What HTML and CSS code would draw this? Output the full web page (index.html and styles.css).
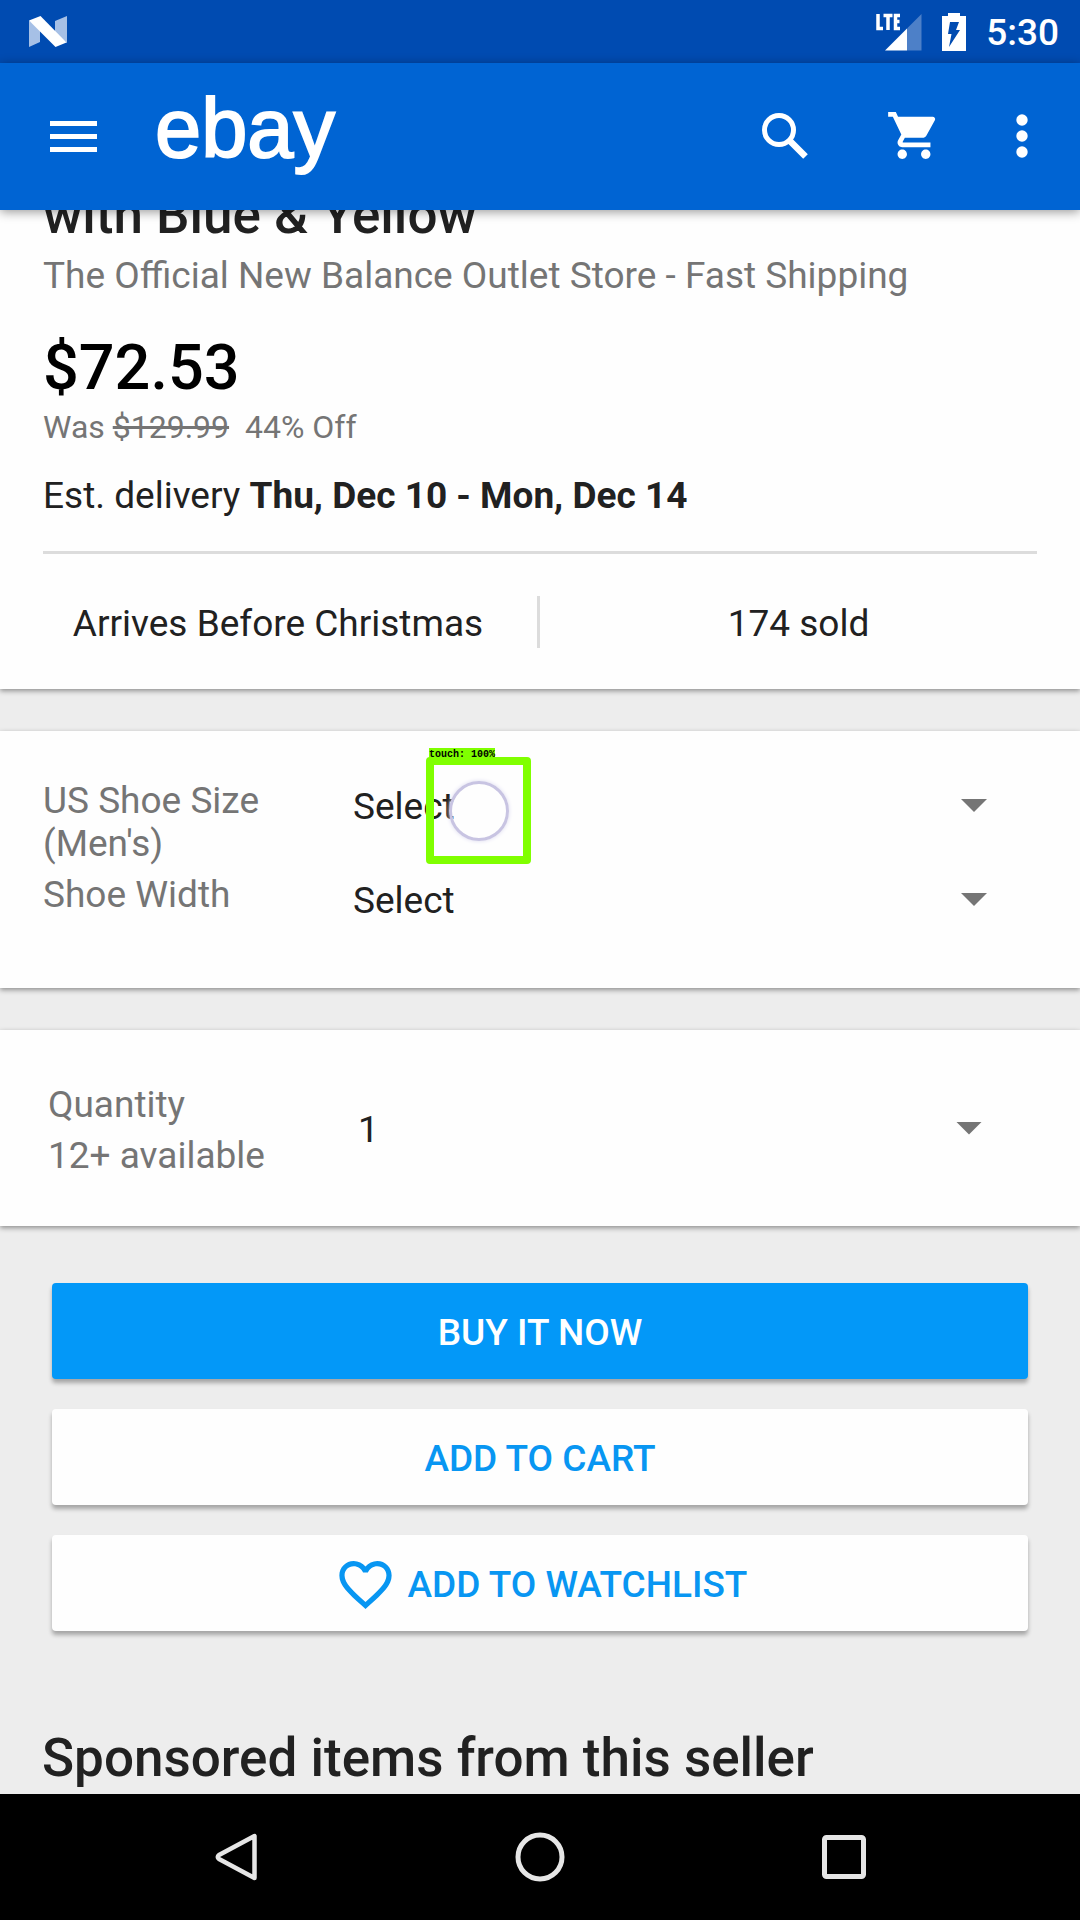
FILE: index.html
```html
<!DOCTYPE html>
<html lang="en">
<head>
<meta charset="utf-8">
<meta name="viewport" content="width=device-width, initial-scale=1">
<title>eBay item</title>
<link rel="stylesheet" href="styles.css">
</head>
<body>
<div class="status-bar">
  <svg class="n-icon" width="40" height="32" viewBox="0 0 40 32" aria-hidden="true">
    <path d="M1 4.500 L12 12 V26 L1 31Z M27 5 L39 0 V27 L27 18Z" fill="#a6c0e6"/>
    <path d="M1 4.500 L12.500 0 L38.500 26.500 L27.500 31Z" fill="#fff"/>
  </svg>
  <div class="status-icons">
    <svg width="46" height="38" viewBox="0 0 46 38" aria-hidden="true">
      <path d="M45.500 1 V37.500 H31 V15.500Z" fill="#4d80c8"/>
      <path d="M31 15.500 V37.500 H9Z" fill="#fff"/>
      <path d="M2 1V15.500H7 M7.500 2.500H16.500 M12 2.500V17 M24 2.500H19.500V15.500H24 M19.500 8.500H23.500" fill="none" stroke="#fff" stroke-width="3.500"/>
    </svg>
    <svg width="24" height="38" viewBox="0 0 24 38" aria-hidden="true">
      <path d="M6 0H18V3H24V38H0V3H6Z" fill="#fff"/>
      <path d="M8 9H17L14 17H18L7 34L9.500 21H6Z" fill="#004bb1"/>
    </svg>
    <span class="clock">5:30</span>
  </div>
</div>

<header class="app-bar">
  <button class="icon-button" type="button" aria-label="Menu">
    <svg width="47" height="31" viewBox="0 0 47 31"><path d="M0 0H47V5H0Z M0 13H47V18H0Z M0 26H47V31H0Z" fill="#fff"/></svg>
  </button>
  <a class="logo" href="#">ebay</a>
  <div class="actions">
    <button class="icon-button" type="button" aria-label="Search">
      <svg width="46" height="46" viewBox="0 0 46 46"><circle cx="17" cy="17" r="14.500" fill="none" stroke="#fff" stroke-width="5"/><path d="M28 28L43.500 43.500" stroke="#fff" stroke-width="6.500"/><path d="M27 27L31 31" stroke="#fff" stroke-width="5"/></svg>
    </button>
    <button class="icon-button" type="button" aria-label="Cart">
      <svg width="48" height="47" viewBox="1 2 20.300 20"><path fill="#fff" d="M7 18c-1.100 0-1.990.9-1.990 2S5.900 22 7 22s2-.9 2-2-.9-2-2-2zM1 2v2h2l3.600 7.590-1.350 2.450c-.16.28-.25.61-.25.960 0 1.100.9 2 2 2h12v-2H7.420c-.14 0-.25-.11-.25-.25l.03-.12.900-1.630h7.450c.75 0 1.410-.41 1.750-1.030l3.580-6.490c.08-.14.12-.31.12-.480 0-.55-.45-1-1-1H5.210l-.94-2H1zm16 16c-1.100 0-1.990.9-1.990 2s.89 2 1.990 2 2-.9 2-2-.9-2-2-2z"/></svg>
    </button>
    <button class="icon-button" type="button" aria-label="More options">
      <svg width="12" height="44" viewBox="0 0 12 44"><circle cx="6" cy="6" r="5.700" fill="#fff"/><circle cx="6" cy="22" r="5.700" fill="#fff"/><circle cx="6" cy="38" r="5.700" fill="#fff"/></svg>
    </button>
  </div>
</header>

<main class="content">
  <section class="card summary">
    <h1 class="title">with Blue &amp; Yellow</h1>
    <p class="subtitle">The Official New Balance Outlet Store - Fast Shipping</p>
    <p class="price">$72.53</p>
    <p class="was">Was <s>$129.99</s>&nbsp; 44% Off</p>
    <p class="delivery">Est. delivery <b>Thu, Dec 10 - Mon, Dec 14</b></p>
    <div class="facts">
      <span>Arrives Before Christmas</span>
      <span>174 sold</span>
    </div>
  </section>

  <section class="card options">
    <div class="option-row">
      <label for="size">US Shoe Size (Men's)</label>
      <div class="picker"><select id="size"><option>Select</option></select></div>
      <div class="touch" aria-hidden="true">
        <span class="touch-label">touch: 100%</span>
        <span class="touch-ring"></span>
      </div>
    </div>
    <div class="option-row">
      <label for="width">Shoe Width</label>
      <div class="picker"><select id="width"><option>Select</option></select></div>
    </div>
  </section>

  <section class="card quantity">
    <label for="qty">Quantity<br>12+ available</label>
    <div class="picker"><select id="qty"><option>1</option></select></div>
  </section>

  <div class="buttons">
    <button class="button primary" type="button">BUY IT NOW</button>
    <button class="button" type="button">ADD TO CART</button>
    <button class="button watch" type="button">
      <svg width="53" height="48" viewBox="2 3 20 18.350" aria-hidden="true"><path fill="#0896f2" d="M16.500 3c-1.740 0-3.410.81-4.500 2.090C10.910 3.810 9.240 3 7.500 3 4.420 3 2 5.420 2 8.500c0 3.780 3.400 6.860 8.550 11.540L12 21.350l1.450-1.320C18.600 15.360 22 12.280 22 8.500 22 5.420 19.580 3 16.500 3zm-4.400 15.550l-.1.100-.1-.1C7.140 14.240 4 11.390 4 8.500 4 6.500 5.500 5 7.500 5c1.540 0 3.040.99 3.570 2.360h1.870C13.460 5.990 14.960 5 16.500 5c2 0 3.500 1.500 3.500 3.500 0 2.890-3.140 5.740-7.900 10.050z"/></svg>
      ADD TO WATCHLIST
    </button>
  </div>

  <h2 class="sponsored">Sponsored items from this seller</h2>
</main>

<nav class="nav-bar" aria-label="System">
  <button class="nav-button" type="button" aria-label="Back">
    <svg width="50" height="50" viewBox="0 0 50 50"><path d="M43.500 4V46L8 27Q5.500 25 8 23Z" fill="none" stroke="#e6e6e6" stroke-width="4.500" stroke-linejoin="round"/></svg>
  </button>
  <button class="nav-button" type="button" aria-label="Home">
    <svg width="50" height="50" viewBox="0 0 50 50"><circle cx="25" cy="25" r="22" fill="none" stroke="#e6e6e6" stroke-width="5"/></svg>
  </button>
  <button class="nav-button" type="button" aria-label="Recent apps">
    <svg width="50" height="50" viewBox="0 0 50 50"><rect x="5.500" y="5.500" width="39" height="39" rx="2" fill="none" stroke="#e6e6e6" stroke-width="5"/></svg>
  </button>
</nav>
</body>
</html>
```
FILE: styles.css
```css
* {
  box-sizing: border-box;
}

body {
  margin: 0;
  height: 100vh;
  display: flex;
  flex-direction: column;
  background: #ededed;
  color: #212121;
  font-family: Roboto, "Noto Sans", sans-serif;
  font-size: 37px;
  line-height: 48px;
}

h1, h2, p {
  margin: 0;
  font-weight: 500;
}

button, select {
  margin: 0;
  padding: 0;
  border: 0;
  background: none;
  color: inherit;
  font: inherit;
}

svg {
  display: block;
  flex: none;
}

.status-bar {
  flex: none;
  height: 63px;
  padding: 0 21px 0 28px;
  display: flex;
  align-items: center;
  justify-content: space-between;
  background: #004bb1;
  color: #fff;
}

.status-icons {
  display: flex;
  align-items: center;
  gap: 20px;
}

.clock {
  padding-top: 3px;
  font-size: 37px;
  font-weight: 500;
}

.app-bar {
  position: relative;
  z-index: 1;
  flex: none;
  height: 147px;
  padding: 0 52px 0 50px;
  display: flex;
  align-items: center;
  background: #0064d3;
  box-shadow: 0 2px 10px rgba(0, 0, 0, 0.4);
}

.logo {
  margin-left: 58px;
  padding-bottom: 16px;
  color: #fff;
  font-family: "Liberation Sans", sans-serif;
  font-size: 83px;
  line-height: 96px;
  text-decoration: none;
  -webkit-text-stroke: 2px #fff;
}

.actions {
  margin-left: auto;
  padding-bottom: 2px;
  display: flex;
  align-items: center;
  gap: 80px;
}

.content {
  flex: 1;
  min-height: 0;
  overflow: hidden;
}

.card {
  background: #fefefe;
  box-shadow: 0 2px 5px rgba(0, 0, 0, 0.4);
}

.card + .card {
  margin-top: 42px;
}

.summary {
  padding: 0 43px;
  display: flow-root;
}

/* The page is scrolled, so the title slides under the app bar. */
.title {
  margin-top: -27px;
  font-size: 53px;
  line-height: 64px;
}

.subtitle {
  margin-top: 5px;
  color: #757575;
  font-weight: 400;
}

.price {
  margin-top: 30px;
  color: #000;
  font-size: 63px;
  line-height: 76px;
}

.was {
  margin-top: 1px;
  color: #757575;
  font-size: 32px;
  font-weight: 400;
  line-height: 40px;
}

.delivery {
  margin-top: 25px;
  font-weight: 400;
}

.facts {
  margin-top: 31px;
  padding: 42px 0 41px;
  border-top: 3px solid #dcdcdc;
  display: grid;
  grid-template-columns: 1fr 1fr;
  line-height: 49px;
  text-align: center;
}

.facts span {
  padding: 3px 24px 0 0;
  border-right: 3px solid #dcdcdc;
}

.facts span + span {
  padding: 3px 0 0 20px;
  border: 0;
}

.options {
  padding: 48px 43px 29px;
  line-height: 43px;
}

.option-row {
  position: relative;
  display: grid;
  grid-template-columns: 310px 1fr;
  min-height: 86px;
}

.option-row + .option-row {
  margin-top: 8px;
}

.option-row label {
  max-width: 260px;
  color: #757575;
}

.option-row .picker {
  padding-top: 6px;
}

.picker {
  display: grid;
  align-items: center;
  align-self: start;
}

.picker select {
  grid-area: 1 / 1;
  width: 100%;
  appearance: none;
  line-height: 43px;
}

.picker::after {
  content: "";
  grid-area: 1 / 1;
  justify-self: end;
  width: 26px;
  height: 13px;
  margin: 0 50px 2px 0;
  background: #757575;
  clip-path: polygon(0 0, 100% 0, 50% 100%);
  pointer-events: none;
}

.touch {
  position: absolute;
  left: 383px;
  top: -22px;
  width: 105px;
  height: 107px;
  border: 8px solid #80ff00;
  border-radius: 4px;
  display: grid;
  place-items: center;
}

.touch-label {
  position: absolute;
  left: -5px;
  top: -17px;
  height: 14px;
  background: #80ff00;
  color: #000;
  font: bold 10px/14px "Liberation Mono", monospace;
  white-space: nowrap;
}

.touch-ring {
  width: 60px;
  height: 60px;
  border: 3px solid #c8c4e2;
  border-radius: 50%;
  background: rgba(255, 255, 255, 0.2);
  box-shadow: 0 0 4px #dcdaf0;
}

.quantity {
  padding: 49px 48px 45px;
  display: grid;
  grid-template-columns: 310px 1fr;
  line-height: 51px;
}

.quantity label {
  color: #757575;
}

.quantity .picker {
  align-self: center;
  padding-bottom: 2px;
}

.buttons {
  padding: 57px 52px 0;
  display: grid;
  gap: 30px;
}

.button {
  height: 96px;
  padding-top: 3px;
  display: flex;
  align-items: center;
  justify-content: center;
  gap: 16px;
  border-radius: 4px;
  background: #fefefe;
  box-shadow: 0 4px 4px rgba(0, 0, 0, 0.3);
  color: #0896f2;
  font-weight: 500;
}

.primary {
  background: #0398f8;
  color: #fff;
}

.watch {
  padding-left: 6px;
}

.sponsored {
  margin-top: 95px;
  padding: 0 42px;
  font-size: 53px;
  line-height: 64px;
}

.nav-bar {
  flex: none;
  height: 126px;
  padding: 0 84px;
  display: grid;
  grid-template-columns: repeat(3, 1fr);
  background: #000;
}

.nav-button {
  display: grid;
  place-items: center;
}
```
